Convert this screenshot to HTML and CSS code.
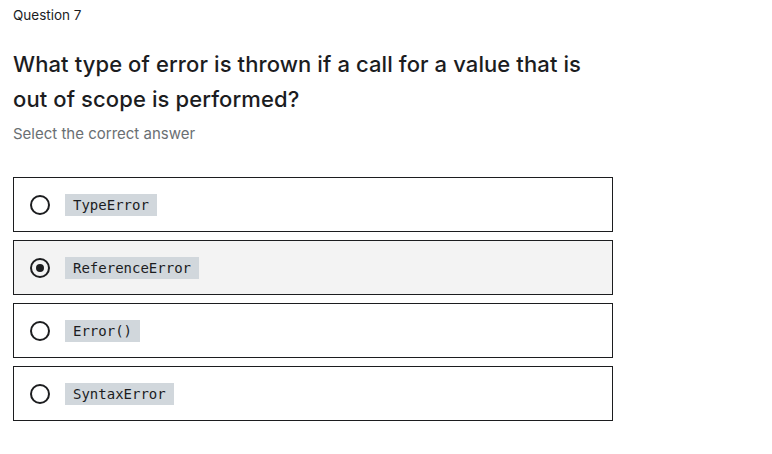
FILE: index.html
```html
<!DOCTYPE html>
<html>
<head>
<meta charset="utf-8">
<link rel="stylesheet" href="styles.css">
</head>
<body>
<div class="quiz">
  <div class="qnum">Question 7</div>
  <h1 class="prompt">What type of error is thrown if a call for a value that is out of scope is performed?</h1>
  <div class="hint">Select the correct answer</div>
  <ul class="answers">
    <li class="answer"><span class="radio"></span><code class="chip">TypeError</code></li>
    <li class="answer selected"><span class="radio checked"></span><code class="chip">ReferenceError</code></li>
    <li class="answer"><span class="radio"></span><code class="chip">Error()</code></li>
    <li class="answer"><span class="radio"></span><code class="chip">SyntaxError</code></li>
  </ul>
</div>
</body>
</html>
```

FILE: styles.css
```css
* { box-sizing: border-box; }
body {
  margin: 0;
  background: #fff;
  font-family: Inter, "Liberation Sans", Arial, sans-serif;
  color: #1c1d1f;
}
.quiz {
  padding: 6px 13px;
  width: 626px;
}
.qnum {
  font-size: 13.5px;
  line-height: 18px;
}
.prompt {
  margin: 23px 0 0;
  font-size: 22px;
  font-weight: 500;
  letter-spacing: 0.1px;
  line-height: 35px;
  width: 585px;
}
.hint {
  margin-top: 7px;
  font-size: 15px;
  line-height: 20px;
  color: #6a6f73;
}
.answers {
  list-style: none;
  margin: 33px 0 0;
  padding: 0;
  width: 600px;
  display: flex;
  flex-direction: column;
  gap: 8px;
}
.answer {
  height: 55px;
  border: 1px solid #1c1d1f;
  display: flex;
  align-items: center;
  padding-left: 16px;
}
.answer.selected { background: #f3f3f3; }
.radio {
  width: 20px;
  height: 20px;
  border: 2px solid #1c1d1f;
  border-radius: 50%;
  display: flex;
  align-items: center;
  justify-content: center;
}
.radio.checked::after {
  content: "";
  width: 8px;
  height: 8px;
  border-radius: 50%;
  background: #1c1d1f;
}
.chip {
  margin-left: 15px;
  background: #d1d7dc;
  font-family: "DejaVu Sans Mono", monospace;
  font-size: 14px;
  line-height: 22px;
  padding: 0 8px;
}
```
